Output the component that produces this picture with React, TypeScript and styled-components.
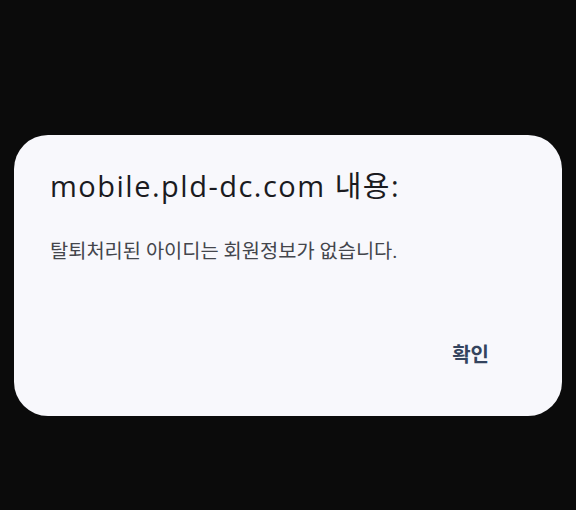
import React from 'react';
import styled, { createGlobalStyle } from 'styled-components';

const GlobalStyle = createGlobalStyle`
  html, body {
    margin: 0;
    padding: 0;
    background: #0b0b0b;
  }
  body {
    font-family: Roboto, "Noto Sans CJK KR", sans-serif;
  }
`;

function App() {
  return (
    <>
      <GlobalStyle />
      <Screen>
        <Dialog>
          <Title>mobile.pld-dc.com 내용:</Title>
          <Message>탈퇴처리된 아이디는 회원정보가 없습니다.</Message>
          <Actions>
            <OkButton>확인</OkButton>
          </Actions>
        </Dialog>
      </Screen>
    </>
  );
}

const Screen = styled.div`
  height: 510px;
  width: 576px;
  box-sizing: border-box;
  padding: 135px 14px 0 14px;
`;

const Dialog = styled.div`
  box-sizing: border-box;
  width: 548px;
  height: 281px;
  background: #f8f8fc;
  border-radius: 34px;
  padding: 31px 36px 0 36px;
  display: flex;
  flex-direction: column;
`;

const Title = styled.h1`
  margin: 0;
  font-family: "Open Sans", "Noto Sans CJK KR", sans-serif;
  font-weight: 400;
  font-size: 29px;
  line-height: 40px;
  letter-spacing: 1.5px;
  color: #1b1b1f;
`;

const Message = styled.p`
  margin: 33px 0 0 0;
  font-family: Roboto, "Noto Sans CJK KR", sans-serif;
  font-size: 19.8px;
  line-height: 26px;
  color: #44464c;
`;

const Actions = styled.div`
  display: flex;
  justify-content: flex-end;
  margin-top: 76px;
  padding-right: 37px;
`;

const OkButton = styled.button`
  border: none;
  background: none;
  padding: 0;
  font-family: "Noto Sans CJK KR", sans-serif;
  font-weight: 700;
  font-size: 20px;
  line-height: 26px;
  color: #34445e;
`;

export default App;
